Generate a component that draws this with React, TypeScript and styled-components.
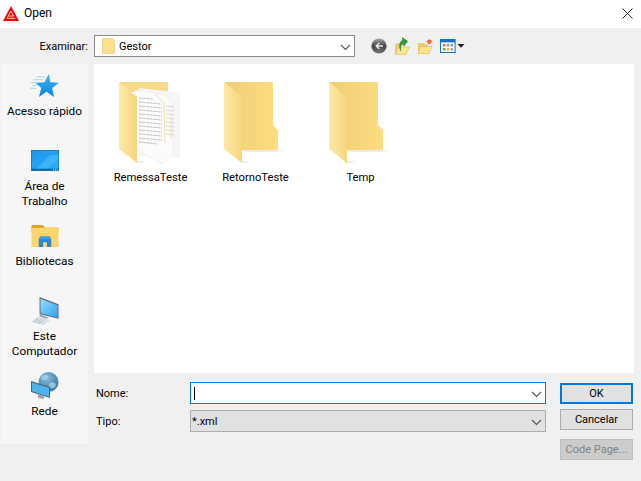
import React from "react";
import styled, { createGlobalStyle } from "styled-components";

const Global = createGlobalStyle`
  html, body { margin: 0; padding: 0; background: #f0f0f0; }
  body { font-family: Roboto, "Noto Sans", "Liberation Sans", sans-serif; font-size: 11px; color: #000; overflow: hidden; }
`;
const Dialog = styled.div`
  width: 641px; height: 481px; background: #f0f0f0; display: flex; flex-direction: column; overflow: hidden;
`;
const TitleBar = styled.div`
  height: 28px; flex-shrink: 0; background: #fff; display: flex; align-items: center; padding: 0 8px 2px 3px; box-sizing: border-box; gap: 5px;
`;
const TitleText = styled.span`flex: 1; font-size: 12px;`;
const Toolbar = styled.div`
  height: 36px; flex-shrink: 0; display: flex; align-items: center;
`;
const LookLabel = styled.span`width: 88px; text-align: right; margin-right: 6px;`;
const Combo = styled.div<{ $w: number; $bg?: string; $bd?: string }>`
  width: ${p => p.$w}px; height: 22px; flex-shrink: 0; box-sizing: border-box; display: flex; align-items: center;
  background: ${p => p.$bg || "#fff"}; border: 1px solid ${p => p.$bd || "#8a8a8a"};
`;
const ComboText = styled.span<{ $inset?: number }>`
  flex: 1; padding-left: ${p => p.$inset ?? 1}px; display: flex; align-items: center; gap: 4px;
`;
const ToolIcons = styled.div`display: flex; align-items: center; margin-left: 16px; gap: 7px;`;
const Content = styled.div`display: flex; padding-left: 1px; flex-shrink: 0;`;
const Sidebar = styled.div`
  width: 87px; height: 380px; background: #f6f6f6; display: flex; flex-direction: column; align-items: center; flex-shrink: 0; font-size: 11.8px;
`;
const Place = styled.div<{ $h: number; $top?: number }>`
  height: ${p => p.$h}px; padding-top: ${p => p.$top ?? 0}px; box-sizing: border-box; display: flex; flex-direction: column; align-items: center;
  text-align: center; line-height: 15px; width: 100%; flex-shrink: 0;
`;
const PlaceIcon = styled.div<{ $gap: number }>`
  height: 31px; margin-bottom: ${p => p.$gap}px; display: flex; align-items: flex-end;
`;
const RightColumn = styled.div`width: 540px; margin-left: 6px; display: flex; flex-direction: column;`;
const List = styled.div`
  height: 309px; background: #fff; display: flex; padding: 18px 0 0 4px; box-sizing: border-box;
`;
const FileItem = styled.div`width: 105px; display: flex; flex-direction: column; align-items: center;`;
const FileLabel = styled.span`margin-top: 6px; line-height: 16px; white-space: nowrap; font-size: 11.2px;`;
const Bottom = styled.div`display: flex; padding-left: 2px; gap: 14px;`;
const Fields = styled.div`display: flex; flex-direction: column; gap: 6px; padding-top: 9px;`;
const FieldRow = styled.div`display: flex; align-items: center;`;
const FieldLabel = styled.span`width: 94px;`;
const Buttons = styled.div`display: flex; flex-direction: column; padding-top: 10px;`;
const Btn = styled.div<{ $primary?: boolean; $off?: boolean; $gap?: number }>`
  width: 73px; height: 21px; box-sizing: border-box; display: flex; align-items: center; justify-content: center;
  margin-bottom: ${p => p.$gap ?? 0}px;
  background: ${p => p.$off ? "#cccccc" : "#e1e1e1"};
  color: ${p => p.$off ? "#838383" : "#000"};
  border: ${p => p.$primary ? "2px solid #0078d7" : `1px solid ${p.$off ? "#bfbfbf" : "#adadad"}`};
`;
const Caret = styled.span`width: 1px; height: 13px; background: #000; margin-left: 3px;`;
const Grow = styled.span`flex: 1;`;

const Chevron = () => (
  <svg width="17" height="19" viewBox="0 0 17 19"><path d="M4 8l4.500 4.500L13 8" fill="none" stroke="#555" strokeWidth="1.1" /></svg>
);

const AppIcon = () => (
  <svg width="16" height="15" viewBox="0 0 16 15">
    <path d="M8 0L16 15H0Z" fill="#f00" />
    <path d="M7.700 5L4.200 12.300h7.800M7.700 5l2.900 5H6.200" fill="none" stroke="#fff" strokeWidth=".8" />
  </svg>
);

const CloseX = () => (
  <svg width="11" height="11" viewBox="0 0 11 11"><path d="M.5.5l10 10M10.500.5l-10 10" stroke="#222" strokeWidth="1" /></svg>
);

const SmallFolder = () => (
  <svg width="13" height="16" viewBox="0 0 13 16">
    <path d="M.5.500h10l2 2v13H.5z" fill="#fbe08e" stroke="#e8cd7e" strokeWidth=".8" />
    <path d="M9.500 15.500V12.500h3" fill="none" stroke="#eed68f" strokeWidth=".8" />
  </svg>
);

const BackIcon = () => (
  <svg width="16" height="16" viewBox="0 0 16 16">
    <defs><linearGradient id="bk" x1="0" y1="0" x2="0" y2="1"><stop offset="0" stopColor="#a8a8a8" /><stop offset=".5" stopColor="#444" /><stop offset="1" stopColor="#777" /></linearGradient></defs>
    <circle cx="8" cy="8" r="7.600" fill="url(#bk)" />
    <path d="M12 8H5.500M8.400 5L5.200 8l3.200 3" fill="none" stroke="#eee" strokeWidth="1.500" />
  </svg>
);

const UpIcon = () => (
  <svg width="16" height="18" viewBox="0 0 16 18">
    <path d="M1 7l4-1v10l-4 1.500z" fill="#eacb72" />
    <path d="M1.500 17.500l2.500-7.500h11.500l-3.500 7.500z" fill="#fbe38f" stroke="#dcb75a" strokeWidth=".6" />
    <path d="M5.500 13c0-4 1.500-6 4-6.500V9L14 5 9.500.5V3c-3 .5-5 3.500-4 10z" fill="#2f9e32" stroke="#1c6f22" strokeWidth=".5" transform="rotate(-10 10 7)" />
  </svg>
);

const NewFolderIcon = () => (
  <svg width="16" height="16" viewBox="0 0 16 16">
    <path d="M1 5h6l1 1.500h3V15H1z" fill="#eacb72" />
    <path d="M1 15.500L3.500 8.500H15l-3 7z" fill="#fbe38f" stroke="#dcb75a" strokeWidth=".6" />
    <path d="M12.400 0v7.600M8.800 3.800h7.200" stroke="#f9c0a0" strokeWidth=".8" />
    <circle cx="12.400" cy="3.800" r="2.200" fill="#ee6a30" />
  </svg>
);

const ViewsIcon = () => (
  <svg width="25" height="14" viewBox="0 0 25 14">
    <rect x=".5" y=".5" width="14.600" height="13" fill="#fff" stroke="#1a6fc9" />
    <rect x="1" y="1" width="14" height="2.400" fill="#1a6fc9" />
    <rect x="3" y="5" width="2.500" height="2.500" fill="#e06b4a" />
    <rect x="6.800" y="5" width="2.500" height="2.500" fill="#8a9aaa" />
    <rect x="10.600" y="5" width="2.500" height="2.500" fill="#8a9aaa" />
    <rect x="3" y="9" width="2.500" height="2.500" fill="#63a94e" />
    <rect x="6.800" y="9" width="2.500" height="2.500" fill="#e2b33c" />
    <rect x="10.600" y="9" width="2.500" height="2.500" fill="#9aa7b5" />
    <path d="M17.500 5h7l-3.500 3.800z" fill="#222" />
  </svg>
);

const StarIcon = () => (
  <svg width="30" height="24" viewBox="0 0 30 25">
    <defs><linearGradient id="st" x1="0" y1="0" x2="0" y2="1"><stop offset="0" stopColor="#39b4f5" /><stop offset="1" stopColor="#1184dc" /></linearGradient></defs>
    <path d="M19 0l1.500 8.500 9 .5-7 5.500 2 9.500-8-5.400-7.800 5.400 2.400-9.300L5 9l9.500-.4z" fill="url(#st)" />
    <path d="M6 3h9M3 6h10M0 9h6M2 12h5M0 15h6" stroke="#9fd8f6" strokeWidth="1" />
  </svg>
);

const DesktopIcon = () => (
  <svg width="28" height="21" viewBox="0 0 28 21">
    <defs><linearGradient id="dk" x1="0" y1="0" x2="1" y2="1"><stop offset="0" stopColor="#1f95ec" /><stop offset="1" stopColor="#28aef5" /></linearGradient></defs>
    <rect width="28" height="21" fill="#0f6fb5" />
    <rect x=".6" y=".6" width="26.800" height="18" fill="url(#dk)" />
    <path d="M6 18.600L19 5h8.400v5L16 18.600z" fill="#51c1f7" opacity=".55" />
    <path d="M22 20h1M24 20h1M26 20h1" stroke="#fff" />
  </svg>
);

const LibraryIcon = () => (
  <svg width="28" height="23" viewBox="0 0 28 24">
    <path d="M0 2a1 1 0 0 1 1-1h11l2 3h14v5H0z" fill="#e0a526" />
    <rect y="3.500" width="28" height="20.500" fill="#fcd56c" />
    <path d="M0 3.500h13" stroke="#e0a526" strokeWidth="1.400" />
    <path d="M9 13h10l1.500 3v8H16v-5h-4v5H7.500v-8z" fill="#2b88cf" />
    <path d="M9 13h10l1.500 3h-13z" fill="#3a9ee2" />
  </svg>
);

const ComputerIcon = () => (
  <svg width="30" height="28" viewBox="0 0 32 31">
    <defs><linearGradient id="mn" x1="0" y1="0" x2="1" y2="1"><stop offset="0" stopColor="#9adcff" /><stop offset="1" stopColor="#2ea2ea" /></linearGradient></defs>
    <path d="M10 0l21 8v16l-21-5z" fill="#5d6e78" />
    <path d="M11 2l19 7v13.600L11 18z" fill="url(#mn)" />
    <path d="M10 19.500l10 3.400-2.500 1.200L10 21.500z" fill="#90a0aa" />
    <path d="M0 28l8-6 14 3.400-7 5.600z" fill="#dbe0e4" />
    <path d="M3 27.500l5.500-4M6 28.500l5.500-4M9 29.500l5.500-4.200" stroke="#b0b6bb" strokeWidth=".9" />
  </svg>
);

const NetworkIcon = () => (
  <svg width="28" height="28" viewBox="0 0 28 28">
    <defs><radialGradient id="gl" cx=".4" cy=".3" r=".8"><stop offset="0" stopColor="#86bcdc" /><stop offset="1" stopColor="#2c6f9c" /></radialGradient></defs>
    <circle cx="17.500" cy="10" r="10" fill="url(#gl)" />
    <path d="M10 5c3-3 6-2 7-1s-1 4-3 4-4 0-4-3zM19 11c3-1 6 0 6 2s-3 4-5 3-3-4-1-5z" fill="#b4d4e6" opacity=".7" />
    <path d="M0 9l19 6v11L0 20z" fill="#4d6470" />
    <path d="M1 10.500l17 5.200v9L1 19.300z" fill="#4db3ef" />
    <path d="M7 22l6 2v3l-6-1z" fill="#9aa7ae" />
  </svg>
);

const FolderFront = ({ id }: { id: string }) => (
  <>
    <defs>
      <linearGradient id={id} x1="0" y1="0" x2="1" y2="0"><stop offset="0" stopColor="#fee9a6" /><stop offset="1" stopColor="#f5d67e" /></linearGradient>
    </defs>
    <path d="M18 79l10 1-10 1z" fill="#e9e9e9" />
    <path d="M0 0l18 15v66L0 67z" fill={`url(#${id})`} />
  </>
);

const PlainFolder = ({ id }: { id: string }) => (
  <svg width="63" height="82" viewBox="0 0 63 82">
    <defs>
      <linearGradient id={id + "b"} x1="0" y1="0" x2="1" y2="0"><stop offset="0" stopColor="#efcf76" /><stop offset="1" stopColor="#fddd80" /></linearGradient>
    </defs>
    <path d="M17 68h37l6 1-8 1H20z" fill="#ececec" />
    <path d="M0 0h49v43l5 5v20H17V15z" fill={`url(#${id}b)`} />
    <FolderFront id={id} />
  </svg>
);

const DocFolder = () => (
  <svg width="63" height="82" viewBox="0 0 63 82">
    <path d="M0 0h49v10H0z" fill="#f7d98a" />
    <path d="M20 6l26 3 15 2v66l-12-3H18z" fill="#f6f6f6" />
    <path d="M16 8l28 4 9 9 1 50-10 11-26-14z" fill="#fbfbfb" stroke="#e6e6e6" strokeWidth=".5" />
    <path d="M20 16l14 1M20 20l22 2M20 24l23 2M20 28l23 2M20 32l23 2M20 36l23 2M20 40l23 2M20 44l23 2M20 48l23 2M20 52l23 2M20 56l23 2M20 60l18 2" stroke="#b0b0b0" strokeWidth=".8" strokeDasharray="3 .6" />
    <path d="M47 24l8 1M47 28l8 1M47 32l8 1M47 36l8 1M47 40l8 1M47 44l8 1M47 48l8 1M47 52l8 1" stroke="#c8c8c8" strokeWidth=".7" />
    <path d="M36 12l9 9 1 40M52 33v23" fill="none" stroke="#f3dfa5" strokeWidth="1" />
    <FolderFront id="fd1" />
  </svg>
);

export default function App() {
  return (
    <Dialog>
      <Global />
      <TitleBar>
        <AppIcon />
        <TitleText>Open</TitleText>
        <CloseX />
      </TitleBar>
      <Toolbar>
        <LookLabel>Examinar:</LookLabel>
        <Combo $w={261}>
          <ComboText $inset={7}><SmallFolder />Gestor</ComboText>
          <Chevron />
        </Combo>
        <ToolIcons>
          <BackIcon />
          <UpIcon />
          <NewFolderIcon />
          <ViewsIcon />
        </ToolIcons>
      </Toolbar>
      <Content>
        <Sidebar>
          <Place $h={76} $top={3}>
            <PlaceIcon $gap={6}><StarIcon /></PlaceIcon>
            Acesso rápido
          </Place>
          <Place $h={76}>
            <PlaceIcon $gap={8}><DesktopIcon /></PlaceIcon>
            Área de<br />Trabalho
          </Place>
          <Place $h={78}>
            <PlaceIcon $gap={7}><LibraryIcon /></PlaceIcon>
            Bibliotecas
          </Place>
          <Place $h={75}>
            <PlaceIcon $gap={4}><ComputerIcon /></PlaceIcon>
            Este<br />Computador
          </Place>
          <Place $h={75}>
            <PlaceIcon $gap={4}><NetworkIcon /></PlaceIcon>
            Rede
          </Place>
        </Sidebar>
        <RightColumn>
          <List>
            <FileItem><DocFolder /><FileLabel>RemessaTeste</FileLabel></FileItem>
            <FileItem><PlainFolder id="f2" /><FileLabel>RetornoTeste</FileLabel></FileItem>
            <FileItem><PlainFolder id="f3" /><FileLabel>Temp</FileLabel></FileItem>
          </List>
          <Bottom>
            <Fields>
              <FieldRow>
                <FieldLabel>Nome:</FieldLabel>
                <Combo $w={356} $bd="#0078d7"><Caret /><Grow /><Chevron /></Combo>
              </FieldRow>
              <FieldRow>
                <FieldLabel>Tipo:</FieldLabel>
                <Combo $w={356} $bg="#e1e1e1" $bd="#adadad"><ComboText>*.xml</ComboText><Chevron /></Combo>
              </FieldRow>
            </Fields>
            <Buttons>
              <Btn $primary $gap={5}>OK</Btn>
              <Btn $gap={9}>Cancelar</Btn>
              <Btn $off>Code Page...</Btn>
            </Buttons>
          </Bottom>
        </RightColumn>
      </Content>
    </Dialog>
  );
}
